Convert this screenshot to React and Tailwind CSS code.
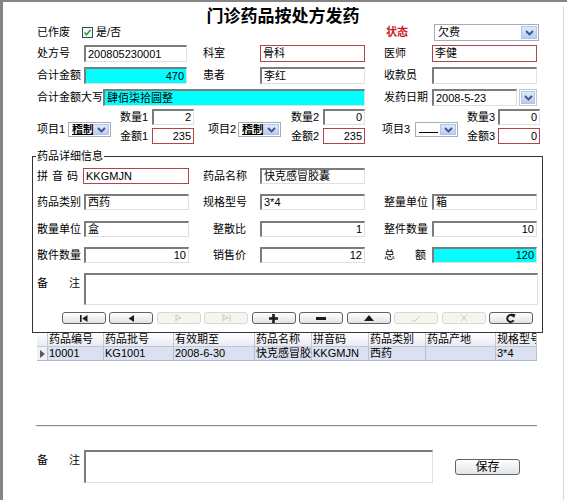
import React from "react";

const sunken =
  "border-t-2 border-l-2 border-r border-b border-t-[#7c7c7c] border-l-[#7c7c7c] border-r-[#e0e0e0] border-b-[#e0e0e0]";

function Field({ className = "", kind = "plain", right = false, children }) {
  const border = kind === "red" ? "border border-[#b3444a]" : sunken;
  const bg = kind === "cyan" ? "bg-[#00ffff]" : "bg-white";
  const align = right ? "justify-end" : "justify-start";
  return (
    <div
      className={`${border} ${bg} ${align} ${className} shrink-0 flex items-center px-[2px] overflow-hidden whitespace-nowrap text-[11px] leading-none`}
    >
      {children}
    </div>
  );
}

const Label = ({ className = "", children }) => (
  <div className={`shrink-0 whitespace-nowrap leading-none ${className}`}>{children}</div>
);

const Spaced = ({ outer, inner, chars }) => (
  <div className={`shrink-0 ${outer}`}>
    <div className={`flex justify-between leading-none ${inner}`}>
      {chars.map((c) => (
        <span key={c}>{c}</span>
      ))}
    </div>
  </div>
);

const Chevron = () => (
  <svg width="9" height="6" viewBox="0 0 9 6">
    <path d="M1 1 L4.5 4.5 L8 1" fill="none" stroke="#3c5486" strokeWidth="1.8" />
  </svg>
);

const DropBtn = ({ className = "" }) => (
  <div
    className={`w-[16px] h-full shrink-0 bg-linear-to-b from-[#dfe9fc] to-[#b8ccf2] border border-[#b3c4e6] flex items-center justify-center ${className}`}
  >
    <Chevron />
  </div>
);

function Select({ className = "", children }) {
  return (
    <div className={`${className} shrink-0 flex items-stretch border border-[#a4adba] bg-white p-[1px]`}>
      <div className="flex-1 flex items-center px-[2px] overflow-hidden whitespace-nowrap leading-none">
        {children}
      </div>
      <DropBtn />
    </div>
  );
}

const Check = () => (
  <svg width="11" height="11" viewBox="0 0 11 11">
    <rect x="0.5" y="0.5" width="10" height="10" fill="#f4f6f4" stroke="#2b4a6a" />
    <path d="M2.5 5.5 L4.5 7.8 L8.5 3" fill="none" stroke="#22a033" strokeWidth="1.6" />
  </svg>
);

const dark = "#1c1c1c";
const dim = "#c9c9bf";

const icons = [
  <svg key="f" width="8" height="7" viewBox="0 0 8 7">
    <rect x="0" y="0" width="1.6" height="7" fill={dark} />
    <polygon points="7.5,0 2.2,3.5 7.5,7" fill={dark} />
  </svg>,
  <svg key="p" width="6" height="7" viewBox="0 0 6 7">
    <polygon points="6,0 0.5,3.5 6,7" fill={dark} />
  </svg>,
  <svg key="n" width="7" height="8" viewBox="0 0 7 8">
    <path d="M1 0.5 V7.5 M1 0.8 L6 4 L1 5.5" fill="none" stroke={dim} strokeWidth="1" />
  </svg>,
  <svg key="l" width="9" height="8" viewBox="0 0 9 8">
    <path d="M1 0.5 V7.5 M1 0.8 L6 4 L1 5.5 M8 0.5 V7.5" fill="none" stroke={dim} strokeWidth="1" />
  </svg>,
  <svg key="a" width="9" height="9" viewBox="0 0 9 9">
    <rect x="3.2" y="0" width="2.6" height="9" fill={dark} />
    <rect x="0" y="3.2" width="9" height="2.6" fill={dark} />
  </svg>,
  <svg key="d" width="10" height="3" viewBox="0 0 10 3">
    <rect x="0" y="0" width="10" height="3" fill={dark} />
  </svg>,
  <svg key="e" width="10" height="6" viewBox="0 0 10 6">
    <polygon points="0,6 5,0 10,6" fill={dark} />
  </svg>,
  <svg key="c" width="10" height="7" viewBox="0 0 10 7">
    <path d="M1 5.5 L3.5 6.5 L9 1" fill="none" stroke={dim} strokeWidth="1" />
  </svg>,
  <svg key="x" width="8" height="8" viewBox="0 0 8 8">
    <path d="M1 1 L7 7 M7 1 L1 7" fill="none" stroke={dim} strokeWidth="1" />
  </svg>,
  <svg key="r" width="10" height="10" viewBox="0 0 10 10">
    <path d="M7.2 3.2 A3.4 3.4 0 1 0 7.6 7.2" fill="none" stroke={dark} strokeWidth="2" />
    <polygon points="4.6,0.6 9.6,1.2 8,5" fill={dark} />
  </svg>,
];
const enabled = [true, true, false, false, true, true, true, false, false, true];

const cols = [
  ["药品编号", "10001", "w-[56px]"],
  ["药品批号", "KG1001", "w-[70px]"],
  ["有效期至", "2008-6-30", "w-[81px]"],
  ["药品名称", "快克感冒胶囊", "w-[57px]"],
  ["拼音码", "KKGMJN", "w-[57px]"],
  ["药品类别", "西药", "w-[57px]"],
  ["药品产地", "", "w-[70px]"],
  ["规格型号", "3*4", "w-[41px]"],
];

export default function App() {
  return (
    <div className="w-[567px] h-[500px] bg-white border-l-[3px] border-t-[2px] border-[#858585] overflow-hidden text-[11px] text-black font-['Liberation_Sans','Noto_Sans_CJK_SC',sans-serif]">
      <div className="w-[561px] h-[495px] border-r border-b border-[#d8d8d8] pl-[34px]">
        <div className="-ml-[34px] mt-[5px] h-[20px] leading-[20px] text-center text-[17px] font-bold">
          门诊药品按处方发药
        </div>

        {/* row 1 */}
        <div className="-mt-[3px] h-[17px] flex items-center">
          <Label className="w-[45px]">已作废</Label>
          <Check />
          <span className="ml-[3px] leading-none">是/否</span>
          <div className="ml-auto mr-[24px] flex items-center h-full">
            <Label className="w-[48px] text-[#d01c1c] font-bold">状态</Label>
            <Select className="w-[105px] h-full">欠费</Select>
          </div>
        </div>

        {/* row 2 */}
        <div className="mt-[4px] h-[17px] flex items-center">
          <Label className="w-[47px]">处方号</Label>
          <Field className="w-[103px] h-full">200805230001</Field>
          <Label className="ml-[16px] w-[57px]">科室</Label>
          <Field kind="red" className="w-[105px] h-full">骨科</Field>
          <Label className="ml-[19px] w-[48px]">医师</Label>
          <Field kind="red" className="w-[105px] h-full">李健</Field>
        </div>

        {/* row 3 */}
        <div className="mt-[5px] h-[17px] flex items-center">
          <Label className="w-[47px]">合计金额</Label>
          <Field kind="cyan" right className="w-[103px] h-full">470</Field>
          <Label className="ml-[16px] w-[57px]">患者</Label>
          <Field className="w-[105px] h-full">李红</Field>
          <Label className="ml-[19px] w-[48px]">收款员</Label>
          <Field className="w-[105px] h-full" />
        </div>

        {/* row 4 */}
        <div className="mt-[5px] h-[17px] flex items-center">
          <Label className="w-[66px]">合计金额大写</Label>
          <Field kind="cyan" className="w-[262px] h-full">肆佰柒拾圆整</Field>
          <Label className="ml-[19px] w-[48px]">发药日期</Label>
          <Field className="w-[85px] h-full">2008-5-23</Field>
          <div className="ml-[2px] w-[18px] h-full border border-[#c6cad0] p-[1px]">
            <DropBtn className="w-full" />
          </div>
        </div>

        {/* items */}
        <div className="mt-[3px] h-[35px] flex items-start">
          <div className="mt-[13px] h-[15px] flex items-center">
            <Label className="w-[31px]">项目1</Label>
            <Select className="w-[43px] h-full">
              <span className="underline font-bold">稽制费</span>
            </Select>
          </div>
          <div className="ml-[9px] flex flex-col">
            <div className="h-[16px] flex items-center">
              <Label className="w-[32px]">数量1</Label>
              <Field right className="w-[42px] h-full">2</Field>
            </div>
            <div className="mt-[3px] h-[16px] flex items-center">
              <Label className="w-[32px]">金额1</Label>
              <Field kind="red" right className="w-[42px] h-full">235</Field>
            </div>
          </div>
          <div className="ml-[14px] mt-[13px] h-[15px] flex items-center">
            <Label className="w-[30px]">项目2</Label>
            <Select className="w-[43px] h-full">
              <span className="underline font-bold">稽制费</span>
            </Select>
          </div>
          <div className="ml-[10px] flex flex-col">
            <div className="h-[16px] flex items-center">
              <Label className="w-[32px]">数量2</Label>
              <Field right className="w-[42px] h-full">0</Field>
            </div>
            <div className="mt-[3px] h-[16px] flex items-center">
              <Label className="w-[32px]">金额2</Label>
              <Field kind="red" right className="w-[42px] h-full">235</Field>
            </div>
          </div>
          <div className="ml-[17px] mt-[13px] h-[15px] flex items-center">
            <Label className="w-[33px]">项目3</Label>
            <Select className="w-[43px] h-full">
              <span className="mt-[5px] w-[20px] border-b border-black" />
            </Select>
          </div>
          <div className="ml-[9px] flex flex-col">
            <div className="h-[16px] flex items-center">
              <Label className="w-[31px]">数量3</Label>
              <Field right className="w-[42px] h-full">0</Field>
            </div>
            <div className="mt-[3px] h-[16px] flex items-center">
              <Label className="w-[31px]">金额3</Label>
              <Field kind="red" right className="w-[42px] h-full">0</Field>
            </div>
          </div>
        </div>

        {/* group box */}
        <div className="relative mt-[12px] -ml-[5px] w-[511px] h-[177px] border border-[#333333] pl-[4px] pt-[11px]">
          <div className="absolute -top-[7px] left-[3px] bg-white px-[1px] leading-[13px]">药品详细信息</div>

          <div className="h-[16px] flex items-center">
            <Spaced outer="w-[46px]" inner="w-[41px]" chars={["拼", "音", "码"]} />
            <Field kind="red" className="w-[106px] h-full text-[10px]">KKGMJN</Field>
            <Label className="ml-[14px] w-[57px]">药品名称</Label>
            <Field className="w-[105px] h-full">快克感冒胶囊</Field>
          </div>

          <div className="mt-[10px] h-[16px] flex items-center">
            <Label className="w-[47px]">药品类别</Label>
            <Field className="w-[105px] h-full">西药</Field>
            <Label className="ml-[14px] w-[57px]">规格型号</Label>
            <Field className="w-[105px] h-full">3*4</Field>
            <Label className="ml-[19px] w-[48px]">整量单位</Label>
            <Field className="w-[105px] h-full">箱</Field>
          </div>

          <div className="mt-[11px] h-[16px] flex items-center">
            <Label className="w-[47px]">散量单位</Label>
            <Field className="w-[105px] h-full">盒</Field>
            <Label className="ml-[14px] w-[57px] text-right pr-[14px]">整散比</Label>
            <Field right className="w-[105px] h-full">1</Field>
            <Label className="ml-[19px] w-[48px]">整件数量</Label>
            <Field right className="w-[105px] h-full">10</Field>
          </div>

          <div className="mt-[10px] h-[16px] flex items-center">
            <Label className="w-[47px]">散件数量</Label>
            <Field right className="w-[105px] h-full">10</Field>
            <Label className="ml-[14px] w-[57px] text-right pr-[14px]">销售价</Label>
            <Field right className="w-[105px] h-full">12</Field>
            <div className="ml-[19px]">
              <Spaced outer="w-[48px]" inner="w-[42px]" chars={["总", "额"]} />
            </div>
            <Field kind="cyan" right className="w-[105px] h-full">120</Field>
          </div>

          <div className="mt-[10px] h-[32px] flex items-start">
            <div className="pt-[5px]">
              <Spaced outer="w-[47px]" inner="w-[43px]" chars={["备", "注"]} />
            </div>
            <Field className="w-[454px] h-full" />
          </div>

          <div className="mt-[7px] ml-[25px] w-[471px] h-[12px] flex justify-between">
            {icons.map((ic, i) => (
              <div
                key={i}
                className={
                  enabled[i]
                    ? "w-[44px] h-full rounded-[3px] border border-[#5e6266] bg-linear-to-b from-white to-[#e2e2e2] flex items-center justify-center"
                    : "w-[44px] h-full rounded-[3px] border border-[#d9d9cc] bg-[#f5f5f0] flex items-center justify-center"
                }
              >
                {ic}
              </div>
            ))}
          </div>
        </div>

        {/* grid */}
        <div className="w-[500px] flex flex-col overflow-hidden text-[11px]">
          <div className="h-[14px] flex border-b border-[#c3c8d6]">
            <div className="w-[11px] shrink-0 border-r border-[#c3c8d6] bg-linear-to-b from-white to-[#e7eaf1]" />
            {cols.map(([h, , w]) => (
              <div
                key={h}
                className={`${w} shrink-0 px-[1px] border-r border-[#c3c8d6] bg-linear-to-b from-white to-[#e7eaf1] flex items-center overflow-hidden whitespace-nowrap leading-none`}
              >
                {h}
              </div>
            ))}
          </div>
          <div className="h-[14px] flex border-b border-[#aeb6cc]">
            <div className="w-[11px] shrink-0 border-r border-[#b8bfd2] bg-[#eef0f6] flex items-center justify-center">
              <svg width="5" height="8" viewBox="0 0 5 8">
                <polygon points="0,0 5,4 0,8" fill="#5a5a5a" />
              </svg>
            </div>
            {cols.map(([h, v, w]) => (
              <div
                key={h}
                className={`${w} shrink-0 px-[1px] border-r border-[#b8bfd2] bg-[#dbe1f1] flex items-center overflow-hidden whitespace-nowrap leading-none`}
              >
                {v}
              </div>
            ))}
          </div>
        </div>

        <div className="mt-[64px] -ml-[1px] w-[501px] h-[2px] border-t border-b border-t-[#8a8a8a] border-b-[#ececec]" />

        {/* bottom remark */}
        <div className="mt-[23px] flex items-start">
          <div className="pt-[5px]">
            <Spaced outer="w-[47px]" inner="w-[43px]" chars={["备", "注"]} />
          </div>
          <Field className="w-[349px] h-[33px]" />
          <button className="ml-[22px] mt-[9px] w-[65px] h-[16px] rounded-[3px] border border-[#5c646c] bg-linear-to-b from-white to-[#e4e4e4] text-[12px] leading-none flex items-center justify-center">
            保存
          </button>
        </div>
      </div>
    </div>
  );
}
